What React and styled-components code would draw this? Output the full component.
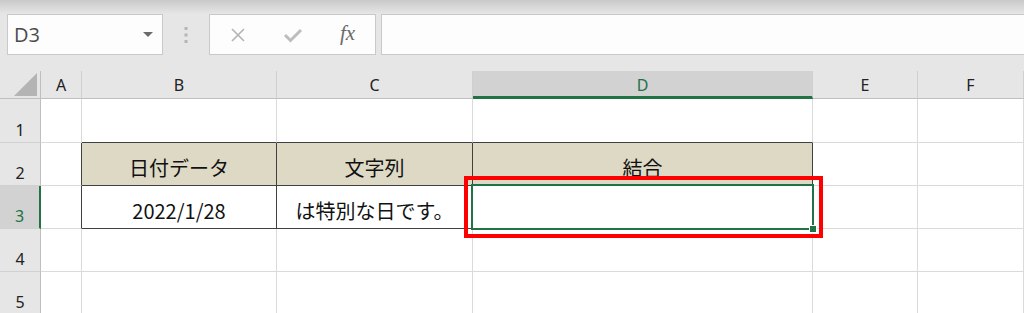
import React from 'react';
import styled, { createGlobalStyle } from 'styled-components';

const GRID = '#dadada';
const DARK = '#404040';
const GREEN = '#217346';
const TAN = '#ddd9c4';

const GlobalStyle = createGlobalStyle`
    html, body {
        margin: 0;
        padding: 0;
        background: #fff;
        overflow: hidden;
    }
`;

const Page = styled.div`
    width: 1024px;
    height: 313px;
    overflow: hidden;
    display: flex;
    flex-direction: column;
    font-family: "Noto Sans", "Liberation Sans", sans-serif;
`;

const Toolbar = styled.div`
    height: 71px;
    flex: none;
    box-sizing: border-box;
    padding: 14px 0 0 7px;
    display: flex;
    align-items: flex-start;
    background: linear-gradient(#c9c9c9 0px, #dedede 10px, #e6e6e6 14px, #e6e6e6 100%);
`;

const Box = styled.div`
    height: 41px;
    box-sizing: border-box;
    background: #fdfdfd;
    border: 1px solid #c9c9c9;
    display: flex;
    align-items: center;
`;

const NameBox = styled(Box)`
    width: 156px;
    padding: 0 9px 0 6px;
    justify-content: space-between;
    font-family: "Open Sans", "Noto Sans", sans-serif;
    font-size: 20px;
    color: #4a4a4a;
`;

const Divider = styled.div`
    width: 46px;
    height: 41px;
    display: flex;
    align-items: center;
    justify-content: center;
`;

const FuncBox = styled(Box)`
    width: 167px;
    display: grid;
    grid-template-columns: repeat(3, 1fr);
    justify-items: center;
`;

const Fx = styled.span`
    font-family: "Liberation Serif", "DejaVu Serif", serif;
    font-style: italic;
    font-size: 21px;
    color: #6a6a6a;
    line-height: 1;
    margin-top: -2px;
`;

const FormulaInput = styled(Box)`
    flex: 1;
    margin-left: 5px;
    border-right: none;
`;

const Sheet = styled.div`
    flex: 1;
    display: grid;
    grid-template-columns: 41px 41px 195px 196px 340px 105px 106px;
    grid-template-rows: 28px 44px 43px 43px 43px 43px;
    overflow: hidden;
`;

const Corner = styled.div`
    background: #e6e6e6;
    border-right: 1px solid #bfbfbf;
    border-bottom: 1px solid #bfbfbf;
    display: flex;
    align-items: flex-end;
    justify-content: flex-end;
    padding: 0 3px 2px 0;
`;

const ColHead = styled.div`
    background: ${p => (p.$active ? '#d2d2d2' : '#e6e6e6')};
    color: ${p => (p.$active ? GREEN : '#222')};
    border-right: 1px solid #d0d0d0;
    border-bottom: ${p => (p.$active ? `3px solid ${GREEN}` : '1px solid #bfbfbf')};
    display: flex;
    align-items: center;
    justify-content: center;
    font-size: 16px;
    padding-top: ${p => (p.$active ? '2px' : '0')};
`;

const RowHead = styled.div`
    background: ${p => (p.$active ? '#d2d2d2' : '#e6e6e6')};
    color: ${p => (p.$active ? GREEN : '#222')};
    border-right: ${p => (p.$active ? `2px solid ${GREEN}` : '1px solid #bfbfbf')};
    border-bottom: 1px solid #d0d0d0;
    display: flex;
    align-items: flex-end;
    justify-content: center;
    font-size: 16px;
    line-height: 22px;
    padding-bottom: 1px;
    box-sizing: border-box;
`;

const Cell = styled.div`
    position: relative;
    background: ${p => p.$fill || '#fff'};
    border-right: 1px solid ${p => p.$r || GRID};
    border-bottom: 1px solid ${p => p.$b || GRID};
    display: flex;
    align-items: flex-end;
    justify-content: center;
    font-family: "Noto Sans CJK JP", "Noto Sans", sans-serif;
    font-size: 20px;
    line-height: 28px;
    color: #111;
    padding-bottom: 3px;
    box-sizing: border-box;
    white-space: nowrap;
`;

const Selection = styled.div`
    position: absolute;
    left: -2px;
    top: -2px;
    right: -2px;
    bottom: -2px;
    border: 2px solid ${GREEN};
    z-index: 2;
`;

const FillHandle = styled.div`
    position: absolute;
    right: -5px;
    bottom: -5px;
    width: 6px;
    height: 6px;
    background: ${GREEN};
    border: 1px solid #fff;
`;

const Highlight = styled.div`
    position: absolute;
    left: -9px;
    top: -10px;
    width: 359px;
    height: 62px;
    box-sizing: border-box;
    border: 4px solid #ff0000;
    z-index: 3;
`;

const columns = ['A', 'B', 'C', 'D', 'E', 'F'];

// 表の罫線と塗り: [列インデックス] -> props
function cellProps(row, col) {
    const inTable = (row === 2 || row === 3) && col >= 1 && col <= 3;
    const p = {};
    if (inTable) {
        p.$r = DARK;
        p.$b = DARK;
        if (row === 2) p.$fill = TAN;
    }
    if (row === 1 && col >= 1 && col <= 3) p.$b = DARK;
    if ((row === 2 || row === 3) && col === 0) p.$r = DARK;
    return p;
}

const values = {
    '2-1': '日付データ',
    '2-2': '文字列',
    '2-3': '結合',
    '3-1': '2022/1/28',
    '3-2': 'は特別な日です。',
};

function App() {
    const rows = [1, 2, 3, 4, 5];

    return (
        <Page>
            <GlobalStyle />
            <Toolbar>
                <NameBox>
                    <span>D3</span>
                    <svg width="10" height="6" viewBox="0 0 10 6">
                        <path d="M0 0 L10 0 L5 5 Z" fill="#6b6b6b" />
                    </svg>
                </NameBox>
                <Divider>
                    <svg width="4" height="16" viewBox="0 0 4 16">
                        <rect x="0.5" y="0" width="3" height="3" fill="#b5b5b5" />
                        <rect x="0.5" y="6.5" width="3" height="3" fill="#b5b5b5" />
                        <rect x="0.5" y="13" width="3" height="3" fill="#b5b5b5" />
                    </svg>
                </Divider>
                <FuncBox>
                    <svg width="16" height="16" viewBox="0 0 16 16">
                        <path d="M2 2 L14 14 M14 2 L2 14" stroke="#b3b3b3" strokeWidth="1.6" fill="none" />
                    </svg>
                    <svg width="20" height="16" viewBox="0 0 20 16">
                        <path d="M2 8 L7.5 13.5 L18 3" stroke="#bdbdbd" strokeWidth="3" fill="none" />
                    </svg>
                    <Fx>fx</Fx>
                </FuncBox>
                <FormulaInput />
            </Toolbar>

            <Sheet>
                <Corner>
                    <svg width="23" height="23" viewBox="0 0 23 23">
                        <path d="M23 0 L23 23 L0 23 Z" fill="#b4b4b4" />
                    </svg>
                </Corner>
                {columns.map(c => (
                    <ColHead key={c} $active={c === 'D'}>{c}</ColHead>
                ))}

                {rows.map(r => (
                    <React.Fragment key={r}>
                        <RowHead $active={r === 3}>{r}</RowHead>
                        {columns.map((c, ci) => (
                            <Cell key={c} {...cellProps(r, ci)}>
                                {values[`${r}-${ci}`]}
                                {r === 3 && c === 'D' && (
                                    <>
                                        <Selection>
                                            <FillHandle />
                                        </Selection>
                                        <Highlight />
                                    </>
                                )}
                            </Cell>
                        ))}
                    </React.Fragment>
                ))}
            </Sheet>
        </Page>
    );
}

export default App;
